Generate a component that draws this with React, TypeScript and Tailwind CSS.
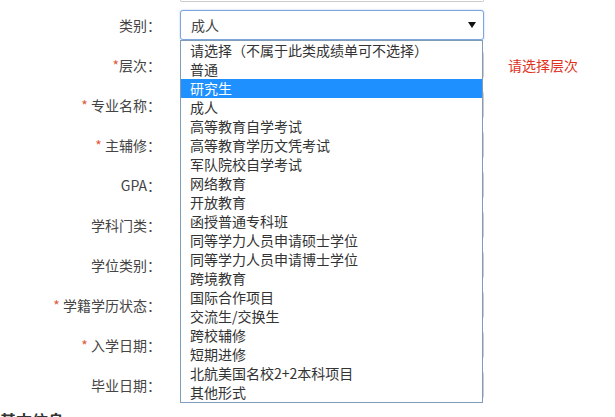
const options = [
  "请选择（不属于此类成绩单可不选择）",
  "普通",
  "研究生",
  "成人",
  "高等教育自学考试",
  "高等教育学历文凭考试",
  "军队院校自学考试",
  "网络教育",
  "开放教育",
  "函授普通专科班",
  "同等学力人员申请硕士学位",
  "同等学力人员申请博士学位",
  "跨境教育",
  "国际合作项目",
  "交流生/交换生",
  "跨校辅修",
  "短期进修",
  "北航美国名校2+2本科项目",
  "其他形式",
];

const rows = [
  { label: "专业名称：", star: "* " },
  { label: "主辅修：", star: "* " },
  { label: "GPA：", star: "" },
  { label: "学科门类：", star: "" },
  { label: "学位类别：", star: "" },
  { label: "学籍学历状态：", star: "* " },
  { label: "入学日期：", star: "* " },
  { label: "毕业日期：", star: "" },
];

function Label({ children, star }: { children: React.ReactNode; star?: string }) {
  return (
    <div className="w-[161px] shrink-0 text-right text-[14px] leading-[20px] text-[#444]">
      {star && <span className="text-[#e4593c]">{star}</span>}
      {children}
    </div>
  );
}

function Field() {
  return <div className="ml-[19px] h-[30px] w-[304px] shrink-0 rounded-[4px] border border-[#ccc] bg-white" />;
}

export default function App() {
  return (
    <div
      className="relative h-[417px] w-[615px] overflow-hidden bg-white"
      style={{ fontFamily: '"Noto Sans CJK SC", "Liberation Sans", sans-serif' }}
    >
      {/* bottom edge of the previous input */}
      <div className="ml-[180px] h-[2px] w-[304px] rounded-b-[4px] border-x border-b border-[#ccc]" />

      <div className="mt-[3px] flex flex-col">
        {/* 类别 */}
        <div className="flex h-[40px] items-center">
          <Label>类别：</Label>
          <div className="relative ml-[19px] w-[304px] shrink-0">
            <div className="flex h-[30px] items-center justify-between rounded-[3px] border border-[#7ea6dc] bg-white pl-[10px] pr-[7px] shadow-[0_0_2px_rgba(102,155,225,0.6)]">
              <span className="text-[14px] leading-[20px] text-[#444]">成人</span>
              <svg width="8" height="6" viewBox="0 0 8 6">
                <path d="M0 0h8L4 6z" fill="#111" />
              </svg>
            </div>
            <ul className="absolute left-0 top-[30px] z-10 w-[303px] border border-[#7f9db9] bg-white py-0">
              {options.map((o, i) => (
                <li
                  key={o}
                  className={`h-[19px] pl-[9px] text-[14px] leading-[19px] whitespace-nowrap ${
                    i === 2 ? "bg-[#1e90ff] text-white" : "text-[#333]"
                  }`}
                >
                  {o}
                </li>
              ))}
            </ul>
          </div>
        </div>

        {/* 层次 */}
        <div className="flex h-[40px] items-center">
          <Label star="*">层次：</Label>
          <Field />
          <span className="ml-[24px] text-[14px] leading-[20px] text-[#e0321f]">请选择层次</span>
        </div>

        {rows.map((r) => (
          <div key={r.label} className="flex h-[40px] items-center">
            <Label star={r.star}>{r.label}</Label>
            <Field />
          </div>
        ))}

        <div className="mt-[4px] text-[16px] font-bold leading-[22px] text-[#333]">基本信息</div>
      </div>
    </div>
  );
}
